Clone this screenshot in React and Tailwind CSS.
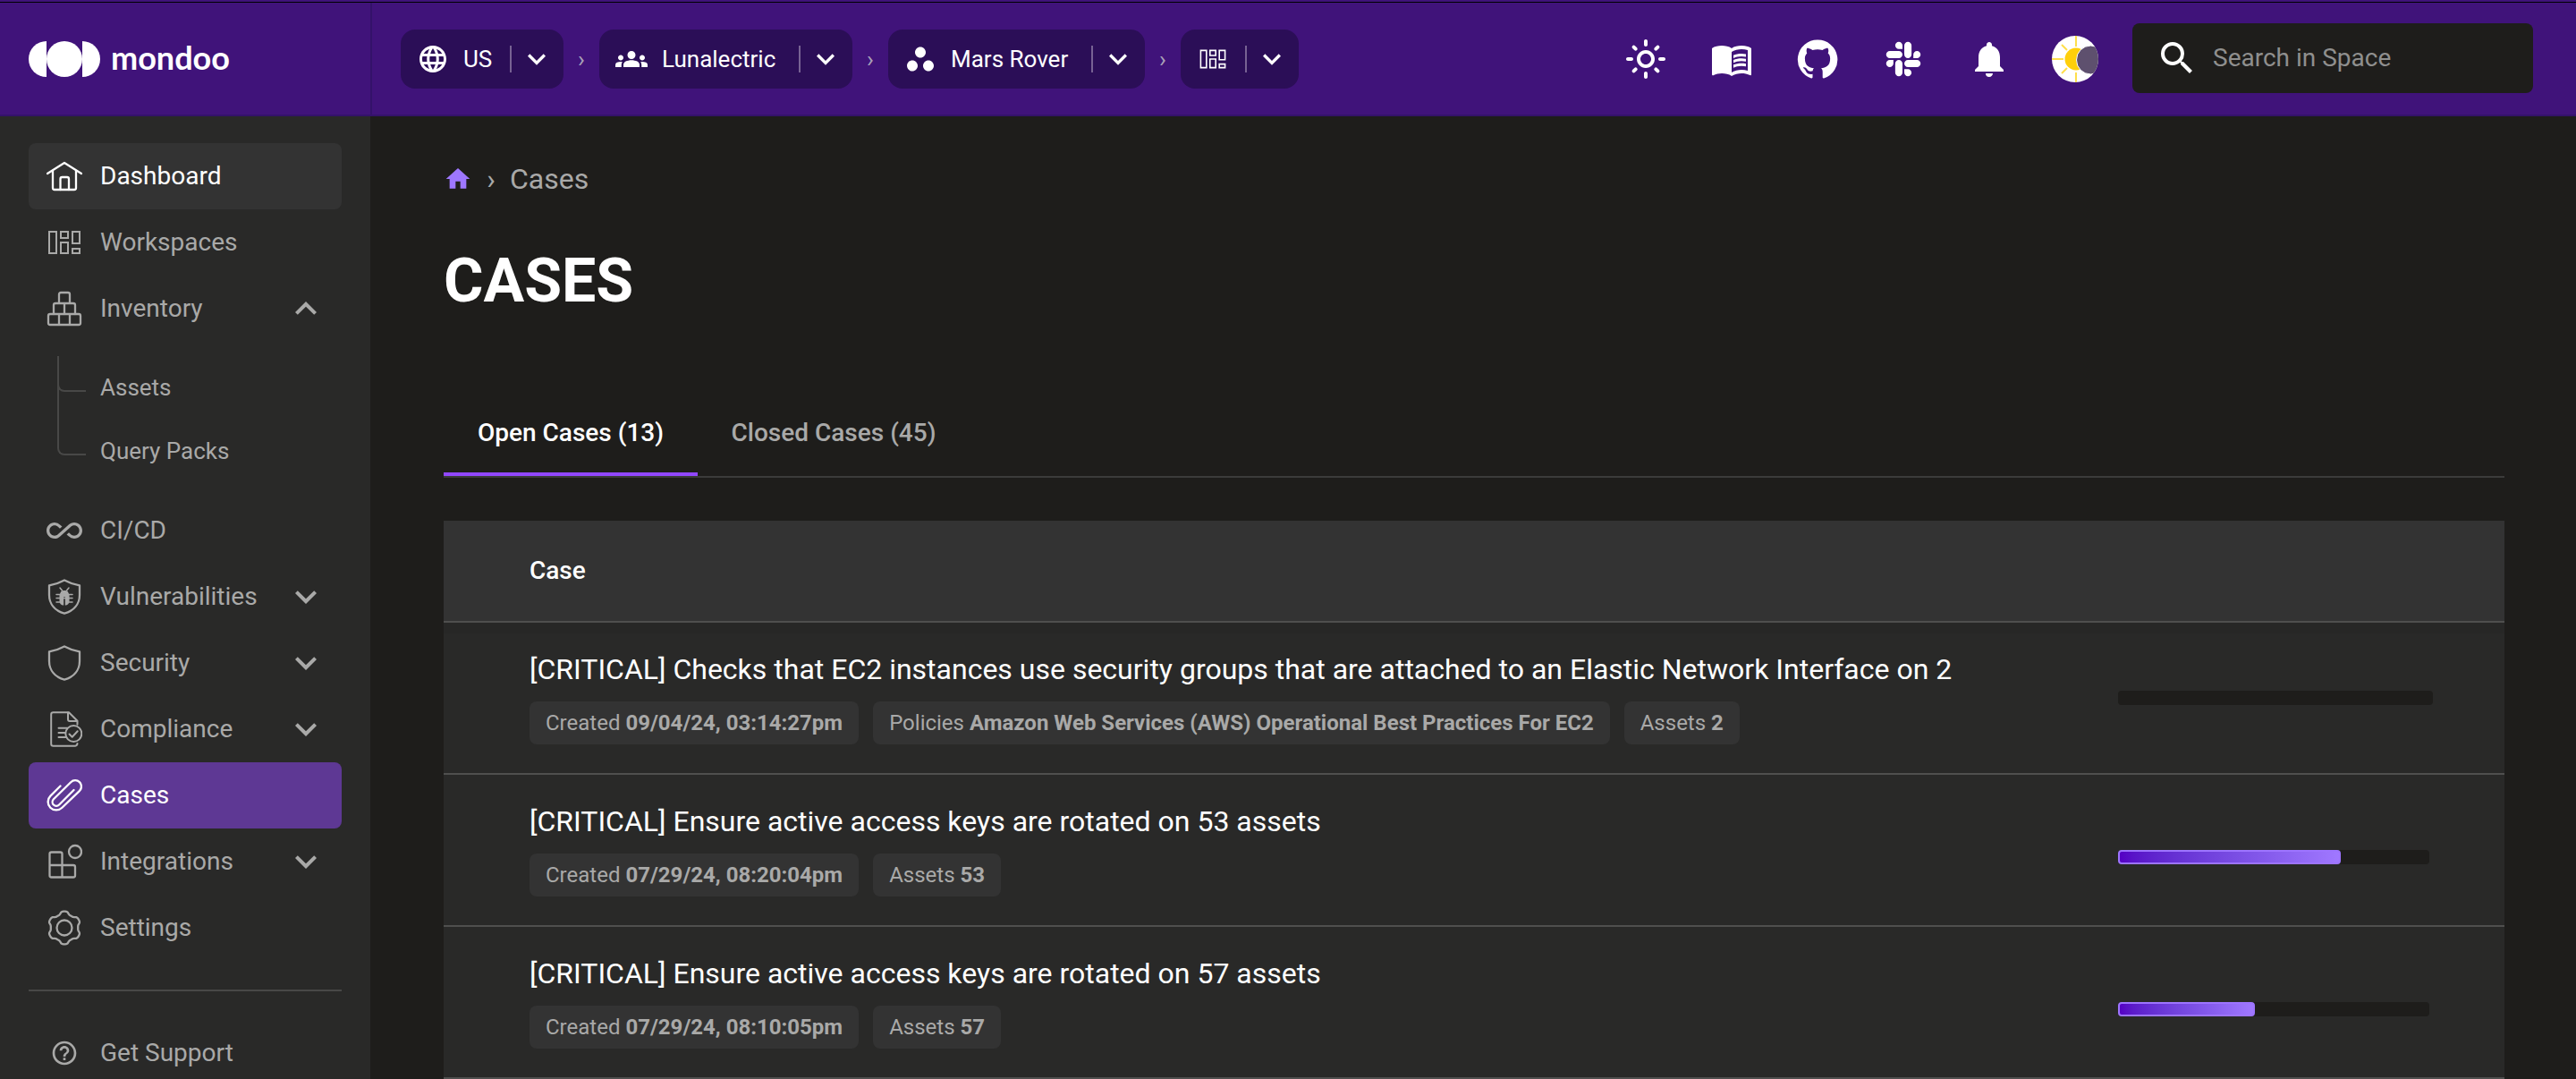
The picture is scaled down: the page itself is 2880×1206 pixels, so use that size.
import React from "react";
import {
  MdAllInclusive,
  MdExpandLess,
  MdExpandMore,
  MdGroups,
  MdHelpOutline,
  MdHome,
  MdLanguage,
  MdMenuBook,
  MdNotifications,
  MdOutlineLightMode,
  MdSearch,
  MdWorkspaces,
} from "react-icons/md";
import { FaSlack } from "react-icons/fa";

function Stroke({ children, size = "size-10", width = 2.3 }) {
  return (
    <svg
      viewBox="0 0 40 40"
      className={size}
      fill="none"
      stroke="currentColor"
      strokeWidth={width}
      strokeLinecap="round"
      strokeLinejoin="round"
      aria-hidden="true"
    >
      {children}
    </svg>
  );
}

const DashboardIcon = () => (
  <Stroke>
    <path d="M1 17 20 5l19 12" />
    <path d="M7 14v19a2 2 0 0 0 2 2h22a2 2 0 0 0 2-2V14" />
    <path d="M15.500 35V23a2 2 0 0 1 2-2h5.500a2 2 0 0 1 2 2v12" />
  </Stroke>
);

const WorkspacesIcon = ({ size }) => (
  <Stroke size={size} width={2}>
    <g strokeLinejoin="miter">
      <path d="M3 8h8v24H3zM16 8h8v7h-8zM16 20h8v12h-8zM29 8h8v13h-8zM29 27h8v5h-8z" />
    </g>
  </Stroke>
);

const InventoryIcon = () => (
  <Stroke>
    <path d="M14 13V4a2 2 0 0 1 2-2h8a2 2 0 0 1 2 2v9" />
    <path d="M8 26V16a2 2 0 0 1 2-2h20a2 2 0 0 1 2 2v10M20 14v12" />
    <path d="M4 26h32a2 2 0 0 1 2 2v8a2 2 0 0 1-2 2H4a2 2 0 0 1-2-2v-8a2 2 0 0 1 2-2zM14 26v12M26 26v12" />
  </Stroke>
);

const SHIELD = "M20 1.500 C26 4.800 31 6.400 37 7.400 V18 C37 28 30.500 35.500 20 38.700 C9.500 35.500 3 28 3 18 V7.400 C9 6.400 14 4.800 20 1.500 Z";

const ShieldIcon = () => (
  <Stroke>
    <path d={SHIELD} />
  </Stroke>
);

const ShieldBugIcon = () => (
  <Stroke>
    <path d={SHIELD} />
    <g strokeWidth="1.500">
      <path d="m15 10 2.500 3M25 10l-2.500 3M11 17.500h18M11 21.500h18M11 26h4l2-1.500M29 26h-4l-2-1.500" />
      <path
        d="M16 14.500c1-2 7-2 8 0l1.500 3.500v6.500c0 3-2 5-4.700 5V20h-1.600v9.500c-2.700 0-4.700-2-4.700-5V18z"
        fill="currentColor"
        stroke="none"
      />
    </g>
  </Stroke>
);

const ComplianceIcon = () => (
  <Stroke width={2}>
    <path d="M34.500 36a3 3 0 0 1-2.500 2.800H7.500a2.300 2.300 0 0 1-2.300-2.300V3.500A2.300 2.300 0 0 1 7.500 1.200H25l9.500 9.500v4" />
    <path d="M24 1.500V9a2 2 0 0 0 2 2h8" />
    <path d="M13.500 18.700H23M13.500 24h7M13.500 29h8" />
    <circle cx="30.300" cy="25" r="9" />
    <path d="m25.500 25.500 3.200 3.200 6-6.500" />
  </Stroke>
);

const PaperclipIcon = () => (
  <Stroke>
    <path d="M15.500 9.500 4.400 20.600a9.200 9.200 0 0 0 13 13.200L37 14.800a6.800 6.800 0 0 0-9.800-9.600L7.900 24.300a4.300 4.300 0 0 0 6.200 6.200L30.500 14" />
  </Stroke>
);

const IntegrationsIcon = () => (
  <Stroke>
    <path d="M17.500 24V11.500a2 2 0 0 0-2-2h-10a2 2 0 0 0-2 2v24a2 2 0 0 0 2 2H30a2 2 0 0 0 2-2V26a2 2 0 0 0-2-2H3.500M17.500 24v13.500" />
    <circle cx="32" cy="9" r="7" />
  </Stroke>
);

const GEAR = Array.from({ length: 120 }, (_, i) => {
  const a = (i / 120) * 2 * Math.PI;
  const r = 16.8 + 1.7 * Math.tanh(1.8 * Math.cos(6 * a));
  return `${(20 + r * Math.sin(a)).toFixed(2)},${(20 - r * Math.cos(a)).toFixed(2)}`;
}).join(" ");

const SettingsIcon = () => (
  <Stroke>
    <polygon points={GEAR} />
    <circle cx="20" cy="20" r="8.500" />
  </Stroke>
);

const GitHubIcon = () => (
  <svg viewBox="0 0 24 24" className="size-12" fill="currentColor" aria-hidden="true">
    <path d="M12 1.27a11 11 0 00-3.48 21.46c.55.09.73-.28.73-.55v-1.84c-3.03.64-3.67-1.46-3.67-1.46-.55-1.29-1.28-1.65-1.28-1.65-.92-.65.1-.65.1-.65 1.1 0 1.73 1.1 1.73 1.1.92 1.65 2.57 1.2 3.21.92a2 2 0 01.64-1.47c-2.47-.27-5.04-1.19-5.04-5.5 0-1.1.46-2.1 1.2-2.84a3.76 3.76 0 010-2.93s.91-.28 3.11 1.1c1.8-.49 3.7-.49 5.500 0 2.1-1.38 3.020-1.1 3.020-1.1a3.760 3.760 0 01.1 2.930c.83.740 1.200 1.740 1.200 2.940 0 4.210-2.570 5.130-5.040 5.400.450.370.820.920.820 2.020v3.030c0 .270.100.640.730.550A11 11 0 0012 1.270" />
  </svg>
);

const AvatarImage = () => (
  <svg viewBox="0 0 52 52" className="size-[52px] shrink-0 rounded-full" aria-hidden="true">
    <rect width="52" height="52" fill="#fff" />
    <g stroke="#fedf4c" strokeWidth="2">
      <path d="M27 0v12M27 41v11M0 26h13M11 10l6 6M11 42l6-6" />
    </g>
    <circle cx="27" cy="26" r="12.500" fill="#ffcf0a" />
    <circle cx="43.500" cy="27" r="16" fill="#5e506e" stroke="#fff" strokeWidth="1" />
  </svg>
);

function Logo() {
  return (
    <a href="#home" className="flex items-center gap-3 text-white">
      <svg viewBox="0 0 80 40" className="h-10 w-20" fill="currentColor" aria-hidden="true">
        <path d="M20 0v40a20 20 0 0 1 0-40z" />
        <circle cx="40" cy="20" r="20" />
        <path d="M60 0v40a20 20 0 0 0 0-40z" />
      </svg>
      <span className="pb-1 font-['Lato',sans-serif] text-[36px] leading-10 font-bold">mondoo</span>
    </a>
  );
}

function ScopePill({ icon, label, name, labelWidth = "" }) {
  return (
    <div className="flex h-[66px] items-center rounded-2xl bg-[#2b0e57] pr-2.5 pl-[18px] text-white">
      <button className="flex items-center gap-4" aria-label={name}>
        <span className="flex w-9 justify-center">{icon}</span>
        {label && <span className={`text-left text-[26px] leading-8 ${labelWidth}`}>{label}</span>}
      </button>
      <span className="ml-[18px] h-[30px] w-0.5 bg-[#776293]" />
      <button className="ml-2" aria-label={`Change ${name}`}>
        <MdExpandMore className="size-10" />
      </button>
    </div>
  );
}

const Separator = () => <span className="w-10 text-center text-[26px] leading-8 text-[#a9a1b8]">›</span>;

function Header() {
  return (
    <header className="flex h-32 shrink-0 items-stretch border-t border-b-2 border-t-black border-b-[#34126a] bg-[#40137a]">
      <div className="flex w-[416px] shrink-0 items-center border-r-2 border-[#34126a] pt-px pl-8">
        <Logo />
      </div>
      <nav aria-label="Scope" className="flex items-center pt-px pl-8">
        <ScopePill name="region" icon={<MdLanguage className="size-9" />} label="US" labelWidth="min-w-[34px]" />
        <Separator />
        <ScopePill
          name="organization"
          icon={<MdGroups className="size-9" />}
          label="Lunalectric"
          labelWidth="min-w-[135px]"
        />
        <Separator />
        <ScopePill
          name="space"
          icon={<MdWorkspaces className="size-9" />}
          label="Mars Rover"
          labelWidth="min-w-[139px]"
        />
        <Separator />
        <ScopePill name="workspace" icon={<WorkspacesIcon size="size-8" />} />
      </nav>
      <div className="ml-auto flex items-center gap-12 pt-px text-white">
        <button aria-label="Light mode"><MdOutlineLightMode className="size-12" /></button>
        <a href="#docs" aria-label="Documentation"><MdMenuBook className="size-12" /></a>
        <a href="#github" aria-label="GitHub"><GitHubIcon /></a>
        <a href="#slack" aria-label="Slack" className="flex w-12 justify-center"><FaSlack className="size-11" /></a>
        <button aria-label="Notifications"><MdNotifications className="size-12" /></button>
        <button aria-label="Account" className="flex w-12 justify-center"><AvatarImage /></button>
      </div>
      <label className="mt-[23px] mr-12 ml-10 flex h-[78px] w-[448px] items-center gap-4 rounded-lg bg-[#1e1d1b] px-[26px] text-white">
        <MdSearch className="size-12 shrink-0" aria-hidden="true" />
        <input
          type="text"
          aria-label="Search in Space"
          placeholder="Search in Space"
          className="min-w-0 flex-1 bg-transparent text-[28px] leading-9 outline-none placeholder:text-[#8f8f8e]"
        />
      </label>
    </header>
  );
}

const ITEM = "flex h-[74px] w-full items-center rounded-lg pr-4 pl-5 text-[28px]";

function NavItem({ icon, label, tone = "text-[#a9a9a8]", expand }) {
  const body = (
    <>
      <span className="flex w-10 shrink-0 justify-center">{icon}</span>
      <span className="ml-5 flex-1 text-left">{label}</span>
    </>
  );
  if (expand) {
    return (
      <li>
        <button className={`${ITEM} ${tone}`} aria-expanded={expand === "open"}>
          {body}
          {expand === "open" ? <MdExpandLess className="size-12" /> : <MdExpandMore className="size-12" />}
        </button>
      </li>
    );
  }
  return (
    <li>
      <a href={`#${label}`} className={`${ITEM} ${tone}`}>
        {body}
      </a>
    </li>
  );
}

function SubItem({ label, last }) {
  return (
    <li className="flex h-[71px]">
      <span className={`ml-8 w-8 ${last ? "" : "border-l-2 border-[#484847]"}`}>
        <span
          className={`block h-10 rounded-bl-lg border-b-2 border-l-2 border-[#484847] ${last ? "" : "-ml-0.5"}`}
        />
      </span>
      <a href={`#${label}`} className="ml-4 flex items-center text-[26px] text-[#a9a9a8]">
        {label}
      </a>
    </li>
  );
}

function Sidebar() {
  return (
    <nav aria-label="Main" className="w-[414px] shrink-0 overflow-hidden bg-[#292928] px-8 pt-[30px]">
      <ul>
        <NavItem icon={<DashboardIcon />} label="Dashboard" tone="bg-[#333333] text-white" />
        <NavItem icon={<WorkspacesIcon size="size-10" />} label="Workspaces" />
        <NavItem icon={<InventoryIcon />} label="Inventory" expand="open" />
        <li>
          <ul className="py-4">
            <SubItem label="Assets" />
            <SubItem label="Query Packs" last />
          </ul>
        </li>
        <NavItem icon={<MdAllInclusive className="size-10" />} label="CI/CD" />
        <NavItem icon={<ShieldBugIcon />} label="Vulnerabilities" expand="closed" />
        <NavItem icon={<ShieldIcon />} label="Security" expand="closed" />
        <NavItem icon={<ComplianceIcon />} label="Compliance" expand="closed" />
        <NavItem icon={<PaperclipIcon />} label="Cases" tone="bg-[#5e3894] text-white" />
        <NavItem icon={<IntegrationsIcon />} label="Integrations" expand="closed" />
        <NavItem icon={<SettingsIcon />} label="Settings" />
      </ul>
      <hr className="my-8 border-t-2 border-[#484847]" />
      <ul>
        <NavItem icon={<MdHelpOutline className="size-8" />} label="Get Support" />
      </ul>
    </nav>
  );
}

const CASES = [
  {
    title: "[CRITICAL] Checks that EC2 instances use security groups that are attached to an Elastic Network Interface on 2",
    chips: [
      ["Created", "09/04/24, 03:14:27pm"],
      ["Policies", "Amazon Web Services (AWS) Operational Best Practices For EC2"],
      ["Assets", "2"],
    ],
    progress: 0,
  },
  {
    title: "[CRITICAL] Ensure active access keys are rotated on 53 assets",
    chips: [
      ["Created", "07/29/24, 08:20:04pm"],
      ["Assets", "53"],
    ],
    progress: 71.6,
  },
  {
    title: "[CRITICAL] Ensure active access keys are rotated on 57 assets",
    chips: [
      ["Created", "07/29/24, 08:10:05pm"],
      ["Assets", "57"],
    ],
    progress: 44,
  },
];

function Progress({ value }) {
  return (
    <div
      role="progressbar"
      aria-label="Completion"
      aria-valuenow={value}
      aria-valuemin={0}
      aria-valuemax={100}
      className={`h-4 rounded bg-[#1e1d1b] ${value > 0 ? "mt-4 mr-1" : ""}`}
    >
      {value > 0 && (
        <div
          className="h-full rounded border-2 border-[#9d74ff] bg-linear-to-r from-[#5500c4] to-[#a078ff]"
          style={{ width: `${value}%` }}
        />
      )}
    </div>
  );
}

function CaseRow({ item }) {
  return (
    <tr className="group bg-[#292928]">
      <td className="h-[170px] border-b-2 border-[#4f4f4e] pl-24 group-first:shadow-[inset_0_12px_0_#272726]">
        <div className="text-[32px] leading-10 text-white">{item.title}</div>
        <div className="mt-4 flex gap-4">
          {item.chips.map(([name, value]) => (
            <span
              key={name}
              className="flex h-12 items-center rounded-lg bg-[#333333] px-[18px] text-[24px] whitespace-pre text-[#a9a9a8]"
            >
              {name} <b className="font-bold">{value}</b>
            </span>
          ))}
        </div>
      </td>
      <td className="w-[448px] border-b-2 border-[#4f4f4e] pr-20 pl-4 group-first:shadow-[inset_0_12px_0_#272726]">
        <Progress value={item.progress} />
      </td>
    </tr>
  );
}

function Main() {
  return (
    <main className="min-w-0 flex-1 pr-20 pl-[82px]">
      <nav aria-label="Breadcrumb" className="mt-[50px] flex h-10 items-center text-[32px] text-[#a9a9a8]">
        <a href="#home" aria-label="Home" className="text-[#9e77ff]"><MdHome className="size-8" /></a>
        <span className="w-[42px] text-center">›</span>
        <span>Cases</span>
      </nav>
      <h1 className="mt-[54px] text-[68px] leading-20 font-bold text-white">CASES</h1>
      <div role="tablist" className="mt-[82px] flex border-b-2 border-[#3b3b3a] text-[28px] font-medium">
        <button role="tab" aria-selected="true" className="h-24 min-w-[284px] border-b-4 border-[#9147ff] px-8 pt-1 text-white">
          Open Cases (13)
        </button>
        <button role="tab" aria-selected="false" className="h-24 min-w-[304px] px-8 text-[#a9a9a8]">
          Closed Cases (45)
        </button>
      </div>
      <table className="mt-12 w-full border-separate border-spacing-0">
        <thead>
          <tr className="bg-[#333333]">
            <th className="h-[114px] border-b-2 border-[#4f4f4e] pl-24 text-left text-[28px] font-medium text-white">Case</th>
            <td className="border-b-2 border-[#4f4f4e]" />
          </tr>
        </thead>
        <tbody>
          {CASES.map((item) => (
            <CaseRow key={item.title} item={item} />
          ))}
        </tbody>
      </table>
    </main>
  );
}

export default function App() {
  return (
    <div className="flex h-screen flex-col overflow-hidden bg-[#1e1d1b] font-['Roboto',sans-serif]">
      <div className="h-0.5 shrink-0 bg-[#40137a]" />
      <Header />
      <div className="flex min-h-0 flex-1 overflow-hidden">
        <Sidebar />
        <Main />
      </div>
    </div>
  );
}
